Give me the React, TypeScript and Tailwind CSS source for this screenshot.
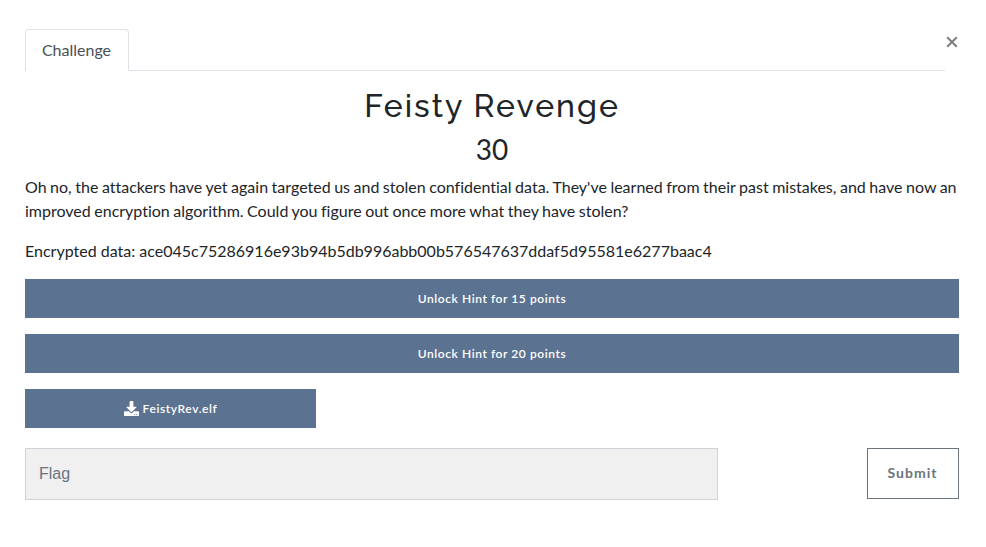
import { FaDownload } from "react-icons/fa";

function HintButton({ cost }: { cost: number }) {
  return (
    <button className="mb-4 block h-[39px] w-full bg-[#5b7290] text-center text-[12px] font-semibold tracking-[0.57px] text-white">
      {`Unlock Hint for ${cost} points`}
    </button>
  );
}

export default function App() {
  return (
    <main className="h-[547px] w-[986px] overflow-hidden bg-white pr-[27px] pl-[25px] pt-[29px] font-[Lato,sans-serif] text-[16px] leading-6 text-[#212529]">
      <header className="flex h-[42px] items-start">
        <nav className="flex h-[42px] w-[920px] border-b border-[#dee2e6]">
          <button className="-mb-px h-[42px] w-[104px] rounded-t border border-b-0 border-[#dee2e6] bg-white pr-px pb-[2px] text-[#495057]">
            Challenge
          </button>
        </nav>
        <button className="mt-[7px] flex h-3 w-[14px] items-center justify-center" aria-label="Close">
          <svg viewBox="0 0 12 12" className="h-3 w-3 shrink-0" stroke="#7f7f7f" strokeWidth="2">
            <path d="M1.2 1.2 10.8 10.8M10.8 1.2 1.2 10.8" />
          </svg>
        </button>
      </header>
      <h2 className="mt-[16px] text-center font-[Raleway,sans-serif] text-[32px] leading-[38px] font-medium tracking-[2px]">Feisty Revenge</h2>
      <h3 className="mt-[7px] mb-[9px] text-center text-[28px] leading-[34px]">30</h3>
      <p className="[font-variant-ligatures:none] [word-spacing:-0.58px]">
        Oh no, the attackers have yet again targeted us and stolen confidential data. They've learned from their past mistakes, and have now an improved encryption algorithm. Could you figure out once more what they have stolen?
      </p>
      <p className="mt-4 mb-4">Encrypted data: ace045c75286916e93b94b5db996abb00b576547637ddaf5d95581e6277baac4</p>
      <HintButton cost={15} />
      <HintButton cost={20} />
      <button className="flex h-[39px] w-[291px] items-center justify-center gap-1 bg-[#5b7290] text-[12px] font-semibold tracking-[0.6px] text-white">
        <FaDownload className="h-[15px] w-[15px]" />
        FeistyRev.elf
      </button>
      <form className="mt-5 flex justify-between">
        <input placeholder="Flag" className="h-[52px] w-[693px] border border-[#ced4da] bg-[#f0f0f0] px-[13px] font-['Liberation_Sans',sans-serif] text-[16px] placeholder:text-[#6c757d]" />
        <button type="button" className="h-[51px] w-[92px] border border-[#6c757d] pr-px pb-[2px] text-[14px] font-bold tracking-[1px] text-[#6c757d]">Submit</button>
      </form>
    </main>
  );
}
